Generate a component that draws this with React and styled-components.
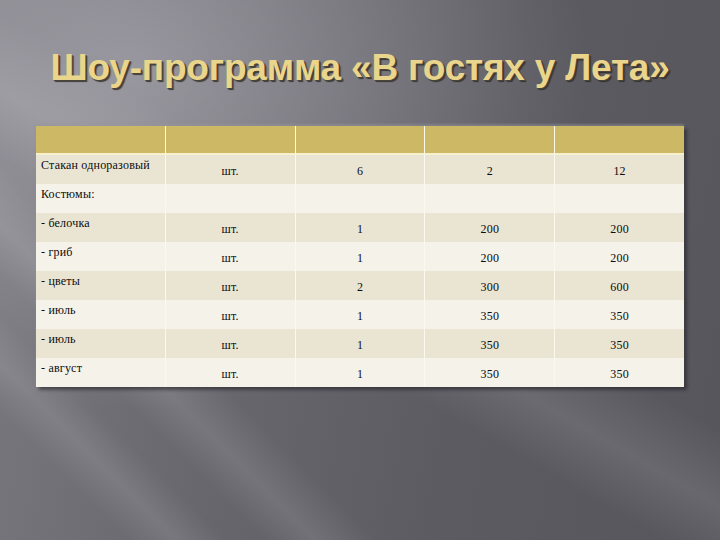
import styled, { createGlobalStyle } from "styled-components";

const GlobalStyle = createGlobalStyle`
	html, body {
		margin: 0;
		padding: 0;
	}

	body {
		font-family: "Liberation Serif", "Times New Roman", serif;
	}
`;

const rows = [
	{ name: "Стакан одноразовый", unit: "шт.", count: "6", price: "2", total: "12" },
	{ name: "Костюмы:", unit: "", count: "", price: "", total: "" },
	{ name: "- белочка", unit: "шт.", count: "1", price: "200", total: "200" },
	{ name: "- гриб", unit: "шт.", count: "1", price: "200", total: "200" },
	{ name: "- цветы", unit: "шт.", count: "2", price: "300", total: "600" },
	{ name: "- июль", unit: "шт.", count: "1", price: "350", total: "350" },
	{ name: "- июль", unit: "шт.", count: "1", price: "350", total: "350" },
	{ name: "- август", unit: "шт.", count: "1", price: "350", total: "350" },
];

const Slide = styled.div`
	width: 720px;
	height: 540px;
	overflow: hidden;
	box-sizing: border-box;
	padding: 40px 36px 0 36px;

	display: flex;
	flex-direction: column;
	align-items: stretch;

	background:
		linear-gradient(45deg, rgba(255, 255, 255, 0) 10%, rgba(255, 255, 255, 0.10) 14%, rgba(255, 255, 255, 0) 18%,
			rgba(255, 255, 255, 0) 21%, rgba(255, 255, 255, 0.10) 25%, rgba(255, 255, 255, 0) 30%),
		linear-gradient(30deg, rgba(255, 255, 255, 0) 40%, rgba(255, 255, 255, 0.10) 47%, rgba(255, 255, 255, 0) 55%),
		radial-gradient(ellipse 460px 340px at 130px 70px, rgba(185, 184, 192, 0.55), rgba(185, 184, 192, 0) 100%),
		linear-gradient(100deg, #7b7a81 0%, #68676e 35%, #5c5b62 65%, #57565d 100%);
`;

const Title = styled.h1`
	margin: 0 0 30px 0;

	color: #ead58c;
	font-family: "Liberation Sans", Arial, sans-serif;
	font-weight: 700;
	font-size: 37px;
	line-height: 56px;
	letter-spacing: -0.2px;
	text-align: center;
	text-shadow: 1px 1px 0 #4a4538, 2px 2px 1px rgba(40, 38, 32, 0.8);
`;

const Table = styled.div`
	width: 648px;

	display: grid;
	grid-template-columns: repeat(5, 1fr);
	column-gap: 1px;

	background-color: #fbf8ee;
	box-shadow: 3px 3px 3px rgba(30, 30, 34, 0.55), 0 -2px 2px rgba(150, 150, 156, 0.5);
`;

const HeaderCell = styled.div`
	height: 27px;
	background-color: #ccb865;
	border-bottom: 2px solid #f7f0cc;
`;

const Cell = styled.div`
	height: 29px;
	box-sizing: border-box;
	padding: ${ (props) => props.$label ? "3px 0 0 5px" : "0" };

	display: flex;
	align-items: ${ (props) => props.$label ? "flex-start" : "center" };
	justify-content: ${ (props) => props.$label ? "flex-start" : "center" };

	background-color: ${ (props) => props.$odd ? "#eae5d3" : "#f5f2ea" };

	color: #0c0c0c;
	font-size: 12px;
	line-height: 14px;
	letter-spacing: 0.2px;
`;

const CellText = styled.span`
	padding-top: 3px;
`;

export default function App() {
	return (
		<>
			<GlobalStyle/>
			<Slide>
				<Title>Шоу-программа «В гостях у Лета»</Title>
				<Table>
					<HeaderCell/>
					<HeaderCell/>
					<HeaderCell/>
					<HeaderCell/>
					<HeaderCell/>
					{
						rows.map((row, index) => {
							const odd = index % 2 === 0;
							return [
								<Cell key={ index + "-name" } $label $odd={ odd }>{ row.name }</Cell>,
								<Cell key={ index + "-unit" } $odd={ odd }><CellText>{ row.unit }</CellText></Cell>,
								<Cell key={ index + "-count" } $odd={ odd }><CellText>{ row.count }</CellText></Cell>,
								<Cell key={ index + "-price" } $odd={ odd }><CellText>{ row.price }</CellText></Cell>,
								<Cell key={ index + "-total" } $odd={ odd }><CellText>{ row.total }</CellText></Cell>,
							];
						})
					}
				</Table>
			</Slide>
		</>);
}
